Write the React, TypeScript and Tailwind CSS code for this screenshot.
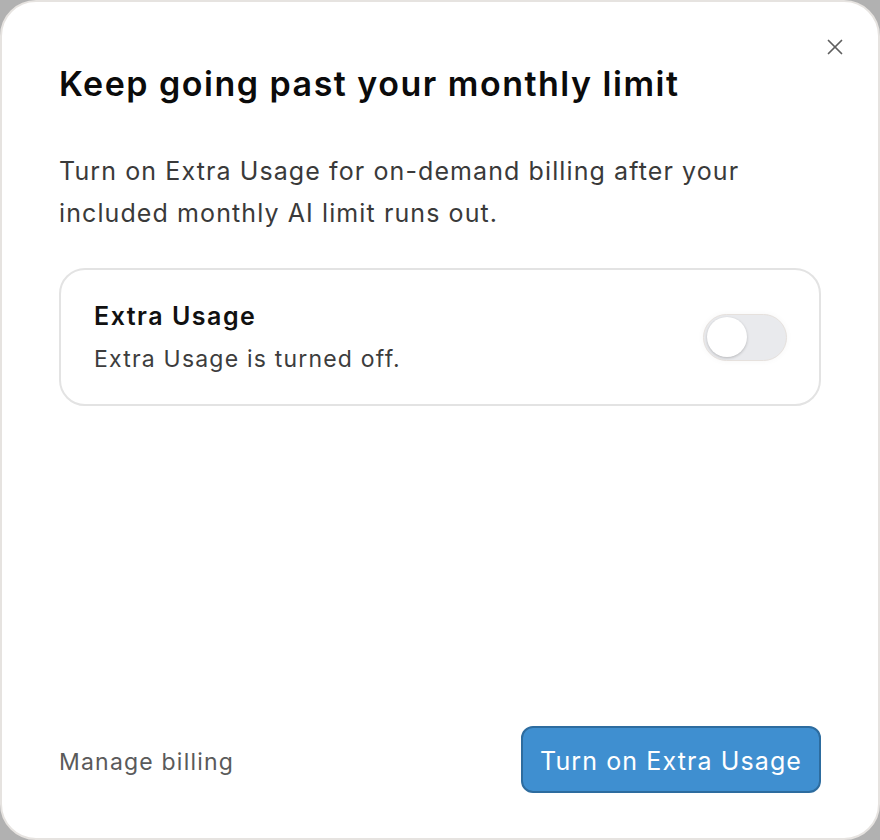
import { X } from 'lucide-react';

function Toggle() {
  return (
    <div className="flex h-[47px] w-[84px] items-center rounded-full border border-[#e6e1dd] bg-[#e9eaed] p-[3px] shadow-[0_0_6px_rgba(0,0,0,0.04)]">
      <div className="h-[40px] w-[40px] rounded-full bg-white shadow-[0_1px_3px_rgba(0,0,0,0.22)]" />
    </div>
  );
}

export default function App() {
  return (
    <div className="h-[840px] w-[880px] bg-[#b1b1b1] font-['Inter',sans-serif]">
      <div className="relative flex h-full w-full flex-col rounded-[36px] border-2 border-[#e6e3e0] bg-white px-[57px] pb-[45px] pt-[62px]">
        <button
          className="absolute right-[30px] top-[32px] text-[#5f5f5f]"
          type="button"
          aria-label="Close"
        >
          <X size={26} strokeWidth={1.6} />
        </button>

        <h1 className="text-[34px] font-semibold leading-[40px] tracking-[1.5px] text-[#0b0b0b]">
          Keep going past your monthly limit
        </h1>

        <p className="mt-[46px] text-[25px] leading-[42px] tracking-[1.1px] text-[#3a3a3a]">
          Turn on Extra Usage for on-demand billing after your
          <br />
          included monthly AI limit runs out.
        </p>

        <div className="mt-[34px] flex items-center justify-between rounded-[26px] border-2 border-[#e3e3e3] py-[29px] pl-[33px] pr-[32px]">
          <div>
            <div className="text-[25px] font-semibold leading-[34px] tracking-[1.5px] text-[#111111]">Extra Usage</div>
            <div className="mt-[10px] text-[23px] leading-[32px] tracking-[1.2px] text-[#3d3d3d]">
              Extra Usage is turned off.
            </div>
          </div>
          <Toggle />
        </div>

        <div className="mt-auto flex items-center justify-between">
          <button className="pt-[5px] text-[23px] tracking-[1.2px] text-[#5a5a5a]" type="button">
            Manage billing
          </button>
          <button
            className="h-[67px] rounded-[12px] border-2 border-[#2d6c9f] bg-[#3f8fd0] px-[17px] pt-[4px] text-[25px] tracking-[1.1px] text-white"
            type="button"
          >
            Turn on Extra Usage
          </button>
        </div>
      </div>
    </div>
  );
}
